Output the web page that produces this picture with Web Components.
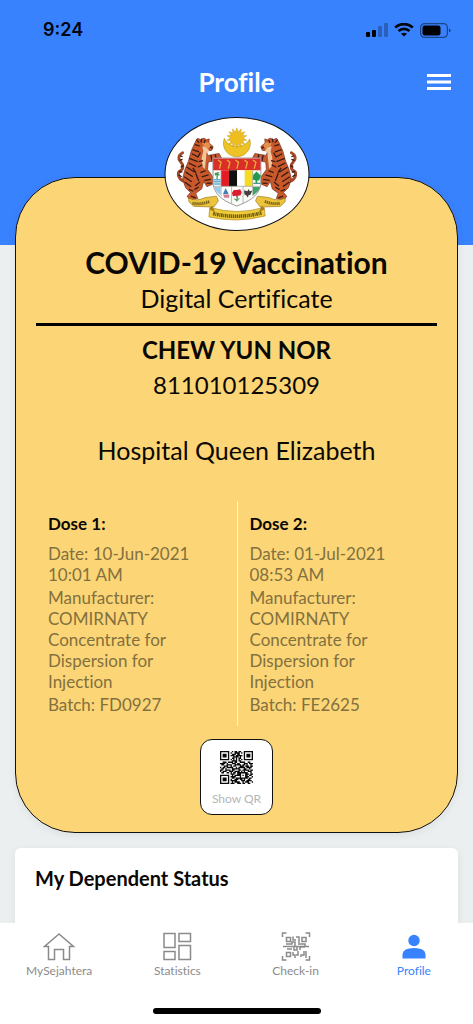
<!DOCTYPE html>
<html lang="en">
<head>
<meta charset="utf-8">
<meta name="viewport" content="width=device-width, initial-scale=1">
<title>Profile</title>
<style>
  body { margin: 0; font-family: Lato, "Liberation Sans", sans-serif; font-variant-ligatures: none; color: #0b0803; }
</style>
</head>
<body>
<profile-app></profile-app>

<script>
const define = (name, html, setup) => {
  const template = document.createElement('template');
  template.innerHTML = html;
  customElements.define(name, class extends HTMLElement {
    constructor() {
      super();
      this.attachShadow({ mode: 'open' }).append(template.content.cloneNode(true));
    }
    connectedCallback() { if (setup) setup(this, this.shadowRoot); }
  });
};

define('status-bar', `
<style>
  :host { display: flex; justify-content: space-between; align-items: center; height: 60px; padding: 0 22px 0 43px; color: #02060f; }
  time { font: 600 18px/24px Inter, sans-serif; }
  div { display: flex; align-items: center; gap: 6px; }
  svg { display: block; }
</style>
<time>9:24</time>
<div>
  <svg width="22" height="14" viewBox="0 0 22 14" aria-label="Signal"><rect y="9" width="4" height="5" rx="1"/><rect x="6" y="7" width="4" height="7" rx="1"/><g opacity=".25"><rect x="12" y="3" width="4" height="11" rx="1"/><rect x="18" width="4" height="14" rx="1"/></g></svg>
  <svg width="20" height="14" viewBox="0 0 20 14" aria-label="Wi-Fi" fill="none" stroke="currentColor" stroke-width="2.7"><path d="M1.2 4.6C6.2-.1 13.800-.1 18.800 4.600M4.500 8C7.500 5.100 12.500 5.100 15.500 8"/><path d="M10 13.600L7 10.800Q10 8.500 13 10.800Z" fill="currentColor" stroke="none"/></svg>
  <svg width="31" height="15" viewBox="0 0 31 15" aria-label="Battery"><rect x=".6" y=".6" width="26.800" height="13.800" rx="4" fill="none" stroke="currentColor" stroke-width="1.200" opacity=".5"/><rect x="2.500" y="2.500" width="18" height="10" rx="2.200"/><path d="M29 5.500q1.500.500 1.500 2t-1.500 2z" opacity=".6"/></svg>
</div>`);

define('title-bar', `
<style>
  :host { display: grid; grid-template-columns: 1fr auto 1fr; align-items: center; height: 44px; padding: 0 22px; color: #fff; }
  h1 { grid-column: 2; margin: 0; font-size: 26px; line-height: 32px; font-weight: 700; }
  button { justify-self: end; padding: 0; border: 0; background: none; color: inherit; }
  svg { display: block; }
</style>
<h1><slot></slot></h1>
<button aria-label="Menu"><svg width="24" height="16" viewBox="0 0 24 16" fill="currentColor"><path d="M0 0h24v3H0zM0 6.500h24v3H0zM0 13h24v3H0z"/></svg></button>`);

define('coat-of-arms', `
<style>
  :host { display: block; box-sizing: border-box; width: 145px; height: 114px; border-radius: 50%; background: #fff; border: 1px solid #111; overflow: hidden; }
  svg { display: block; width: 100%; height: 100%; }
</style>
<svg viewBox="27 21 435 339" role="img" aria-label="Coat of arms of Malaysia">
  <path d="M206 82a41 41 0 1 0 77 2a40 32 0 0 1-77-2z" fill="#edc326" stroke="#bd9620" stroke-width="2"/>
  <path id="sun" fill="#eebe21" stroke="#d3a11b" stroke-width="1.500"/>
  <g id="tiger">
    <path d="M84 213C64 205 62 186 72 181S82 162 73 153S66 133 79 126" fill="none" stroke="#a64a28" stroke-width="9" stroke-linecap="round"/>
    <path d="M76 199l-9-6M68 183l10 2M82 165l-9 5M70 149l9-3M71 135l8 3" stroke="#291714" stroke-width="4"/>
    <path d="M117 94L124 82L135 86Q144 77 151 86L160 84L159 96L172 107L168 118L151 121L156 134L190 128L197 141L188 149L157 154L155 177L171 199L172 221L153 229L143 213L137 236L119 249L125 265L101 270L93 258L103 247L88 232L79 205L86 177L97 151L105 121Z" fill="#c9592b" stroke="#6e2d1d" stroke-width="2"/>
    <path d="M139 106l13 3 8 11-8 5-2 20-3 30-8-7-2-27 5-19z" fill="#f0c59c"/>
    <path d="M139 96l18-2 9 12-8 7-14-6z" fill="#e88e4d"/>
    <path d="M121 86l8 9M137 83l-2 11M148 87l-4 9M162 108l8 4M116 101l15 4M109 116l20 7M107 129l20 10M99 143l26 10M98 157l22 11M91 169l25 16M88 184l22 15M84 199l23 15M85 215l20 14M98 237l14 6M133 125l-7 14M141 150l-13 3M139 163l-14 7M149 180l-16 6M158 193l-21 6M165 207l-20 3M167 218l-15 1M132 215l-15 12M128 230l-13 8M165 133l4 18M178 131l4 17M104 258l15 5M119 188l9 24M110 172l10 14" stroke="#3a1b14" stroke-width="4" fill="none"/>
  </g>
  <use href="#tiger" transform="translate(489 0) scale(-1 1)"/>
  <path d="M171 142H317V224C310 260 275 276 244 288C213 276 180 261 172 224Z" fill="#fbfbf7" stroke="#979797" stroke-width="3"/>
  <path d="M172 143H316V179H172Z" fill="#dc2e28"/>
  <path d="M187 148l9 7-5 19M214 148l9 7-5 19M240 148l9 7-5 19M267 148l9 7-5 19M293 148l9 7-5 19" fill="none" stroke="#e5b337" stroke-width="4"/>
  <path d="M196 179h24v49h-24z" fill="#e51a24"/><path d="M220 179h25v49h-25z" fill="#101010"/><path d="M245 179h23v49h-23z" fill="#fff"/><path d="M268 179h24v49h-24z" fill="#f6dc21"/>
  <path d="M184 185v22M177 188l14 6M190 186l-13 8" stroke="#47985a" stroke-width="4"/>
  <path d="M174 208h21M174 214h21M175 221h20" stroke="#62acd0" stroke-width="4"/>
  <path d="M304 183l13 13-5 14h-6v10h-5v-10l-9-3 2-14z" fill="#269950"/><path d="M294 219h22" stroke="#499" stroke-width="4"/>
  <path d="M173 228H316M196 180V257M292 180V257M228 228V280M263 228V280" stroke="#999" stroke-width="2"/>
  <path d="M175 230h20v24q-16-9-20-24z" fill="#9bcbe8"/><path d="M293 230h22q-5 16-22 25z" fill="#41a367"/>
  <path d="M202 251l8-18 9 18z" fill="#3f80ba"/><path d="M202 253h19v10h-15z" fill="#cb8194"/>
  <path d="M244 239l10-2 5 9-4 10-9 1 1 11-5-11-10 1-3-10 6-9z" fill="#da1e31"/><path d="M245 256l-1 18M236 266l8 5 8-6" stroke="#36834b" stroke-width="3" fill="none"/>
  <path d="M266 240l10 3 4-7 3 7 8-2-5 12-7 3-1 7-5-7-6-4z" fill="#454040"/>
  <path d="M98 264Q122 275 148 262L182 258L188 272L174 291L113 289L98 275Z" fill="#ebc33d" stroke="#9d791d" stroke-width="2"/>
  <path d="M391 264Q367 275 341 262L307 258L301 272L315 291L376 289L391 275Z" fill="#ebc33d" stroke="#9d791d" stroke-width="2"/>
  <path d="M162 292Q244 317 327 292L330 318Q244 341 159 321Z" fill="#efcb38" stroke="#a98420" stroke-width="2"/>
  <path d="M169 286l-9 12 18 9zM320 286l9 12-18 9z" fill="#a68020"/>
  <path d="M109 279q24 6 52-5M329 274q26 10 47 5" fill="none" stroke="#7a6316" stroke-width="9" stroke-dasharray="4 2"/>
  <path d="M172 311Q244 328 319 309" fill="none" stroke="#6d5a12" stroke-width="11" stroke-dasharray="5 2 3 2"/>
</svg>`, (host, root) => {
  const points = [];
  for (let i = 0; i < 28; i++) {
    const r = i % 2 ? 19 : 31, a = Math.PI * i / 14 - Math.PI / 2;
    points.push((244 + r * Math.cos(a)).toFixed(1) + ' ' + (81 + r * Math.sin(a)).toFixed(1));
  }
  root.getElementById('sun').setAttribute('d', 'M' + points.join('L') + 'Z');
});

define('dose-record', `
<style>
  :host { display: block; padding: 11px 34px 11px 12px; font-size: 17px; line-height: 21px; color: #83703f; }
  h3 { margin: 0 0 7px; font-size: 17px; line-height: 24px; font-weight: 700; color: #0b0803; }
  ::slotted(p) { margin: 0; }
  div { display: flex; flex-direction: column; gap: 2px; }
</style>
<h3></h3>
<div><slot></slot></div>`, (host, root) => {
  root.querySelector('h3').textContent = host.getAttribute('label');
});

define('qr-button', `
<style>
  :host { display: block; }
  button { display: flex; flex-direction: column; align-items: center; box-sizing: border-box; width: 73px; height: 76px; margin: 0 auto; padding: 11px 0 0; gap: 7px; border: 1px solid #111; border-radius: 12px; background: #fff; font: 12px/16px Lato, sans-serif; color: #b4b6b8; }
  svg { display: block; width: 33px; height: 33px; }
</style>
<button><svg viewBox="0 0 25 25" aria-hidden="true"><path fill="#090909"/></svg><slot></slot></button>`, (host, root) => {
  const rows = [
    '1111111001011011001111111', '1000001010011110101000001', '1011101001110110001011101',
    '1011101011101111101011101', '1011101000111101001011101', '1000001001101011001000001',
    '1111111010101010101111111', '0000000001111011000000000', '0011101111011001111001100',
    '1111010001110110001110111', '0110011110011111011010010', '0001110010110001110111011',
    '1011011111001011111011110', '0110100001111110001100100', '1100111101100011011111011',
    '1011100111011110101001110', '0110011010110111111110010', '0000000011100111000111011',
    '1111111001011111010110110', '1000001011110001000111001', '1011101001101111111110110',
    '1011101010011101101001100', '1011101011111000111011110', '1000001001011110010111001',
    '1111111011100111011001100'];
  let d = '';
  rows.forEach((row, y) => [...row].forEach((bit, x) => { if (bit === '1') d += `M${x} ${y}h1v1h-1z`; }));
  root.querySelector('path').setAttribute('d', d);
});

define('vaccine-card', `
<style>
  :host { display: block; position: relative; margin: 73px 15px 0; padding: 67px 20px 17px; border: 1px solid #111; border-radius: 60px; background: #fcd676; text-align: center; font-size: 25px; box-shadow: 0 2px 8px #0001; }
  coat-of-arms { position: absolute; top: -61px; left: 50%; transform: translateX(-50%); }
  h2, h3, p { margin: 0; }
  h2 { font-size: 30px; line-height: 34px; }
  .kind { line-height: 38px; }
  hr { height: 3px; margin: 6px 0; border: 0; background: #000; }
  h3 { font-size: 24px; line-height: 36px; }
  .id { font-size: 24px; line-height: 34px; }
  .place { margin-top: 30px; line-height: 36px; }
  .doses { display: grid; grid-template-columns: 1fr 1fr; margin: 33px 0 13px; text-align: left; }
  ::slotted(.second) { border-left: 1px solid #fff4d8; }
</style>
<coat-of-arms></coat-of-arms>
<h2>COVID-19 Vaccination</h2>
<p class="kind">Digital Certificate</p>
<hr>
<h3><slot name="name"></slot></h3>
<p class="id"><slot name="id"></slot></p>
<p class="place"><slot name="place"></slot></p>
<div class="doses"><slot></slot></div>
<qr-button>Show QR</qr-button>`);

define('dependent-panel', `
<style>
  :host { display: block; min-height: 120px; margin: 15px 15px 0; padding: 18px 20px; border-radius: 6px; background: #fff; box-sizing: border-box; box-shadow: 0 2px 8px #0001; }
  h2 { margin: 0; font-size: 20px; line-height: 24px; }
</style>
<h2><slot></slot></h2>`);

define('tab-link', `
<style>
  :host { display: block; flex: 1 1 0; color: #8b8b8b; }
  :host([current]) { color: #3982fd; }
  a { display: flex; flex-direction: column; align-items: center; gap: 1px; color: inherit; text-decoration: none; font-size: 12px; line-height: 18px; }
</style>
<a href="#"><slot name="icon"></slot><slot></slot></a>`);

define('tab-bar', `
<style>
  :host { display: block; background: #fff; padding: 8px 0 10px; }
  nav { display: flex; margin-bottom: 28px; }
  svg { display: block; width: 32px; height: 30px; fill: none; stroke: currentColor; stroke-width: 1.500; }
  .home { width: 168px; height: 6px; margin: 0 auto; border-radius: 3px; background: #000; }
</style>
<nav>
  <tab-link><svg slot="icon" viewBox="0 0 32 30"><path d="M16 3L1.500 15.500H5.500V28.500H11.500V18.500H20.500V28.500H26.500V15.500H30.500Z"/></svg>MySejahtera</tab-link>
  <tab-link><svg slot="icon" viewBox="0 0 32 30"><path d="M3 2.500h11v14H3zM18 2.500h11.500v8H18zM3 20.500h11v8H3zM18 14.500h11.500v14H18z"/></svg>Statistics</tab-link>
  <tab-link><svg slot="icon" viewBox="0 0 32 30"><path d="M2.500 6V2h4M25.500 2h4v4M29.500 25v4h-4M6.500 29h-4v-4M3 15.500h26M6.500 6.500h4v4h-4zM22 6.500h4v4h-4zM6.500 21.500h4v4h-4zM13 5.500v3.500h3M16 6h3v6M6 13h6v-2h3v4M18 13h7v2M7 18h5M14 16v3h3v-4M20 19v-3h5M13 21v3h2v3M18 20v4h-2M21 26v-2h3v-4M26 20v7"/></svg>Check-in</tab-link>
  <tab-link current><svg slot="icon" viewBox="0 0 32 30"><g fill="currentColor" stroke="none"><circle cx="16" cy="9.500" r="5.700"/><path d="M4.500 27.500V23Q5 17 16 17T27.500 23V27.500Z"/></g></svg>Profile</tab-link>
</nav>
<div class="home"></div>`);

define('profile-app', `
<style>
  :host { display: flex; flex-direction: column; height: 100vh; background: linear-gradient(#3982fd 245px, #ebeff0 245px); }
  main { flex: 1; min-height: 0; overflow: hidden; }
  tab-bar { flex: none; }
</style>
<main>
  <status-bar></status-bar>
  <title-bar>Profile</title-bar>
  <vaccine-card>
    <span slot="name">CHEW YUN NOR</span>
    <span slot="id">811010125309</span>
    <span slot="place">Hospital Queen Elizabeth</span>
    <dose-record label="Dose 1:">
      <p>Date: 10-Jun-2021 10:01 AM</p>
      <p>Manufacturer: COMIRNATY Concentrate for Dispersion for Injection</p>
      <p>Batch: FD0927</p>
    </dose-record>
    <dose-record label="Dose 2:" class="second">
      <p>Date: 01-Jul-2021 08:53 AM</p>
      <p>Manufacturer: COMIRNATY Concentrate for Dispersion for Injection</p>
      <p>Batch: FE2625</p>
    </dose-record>
  </vaccine-card>
  <dependent-panel>My Dependent Status</dependent-panel>
</main>
<tab-bar></tab-bar>`);
</script>
</body>
</html>
